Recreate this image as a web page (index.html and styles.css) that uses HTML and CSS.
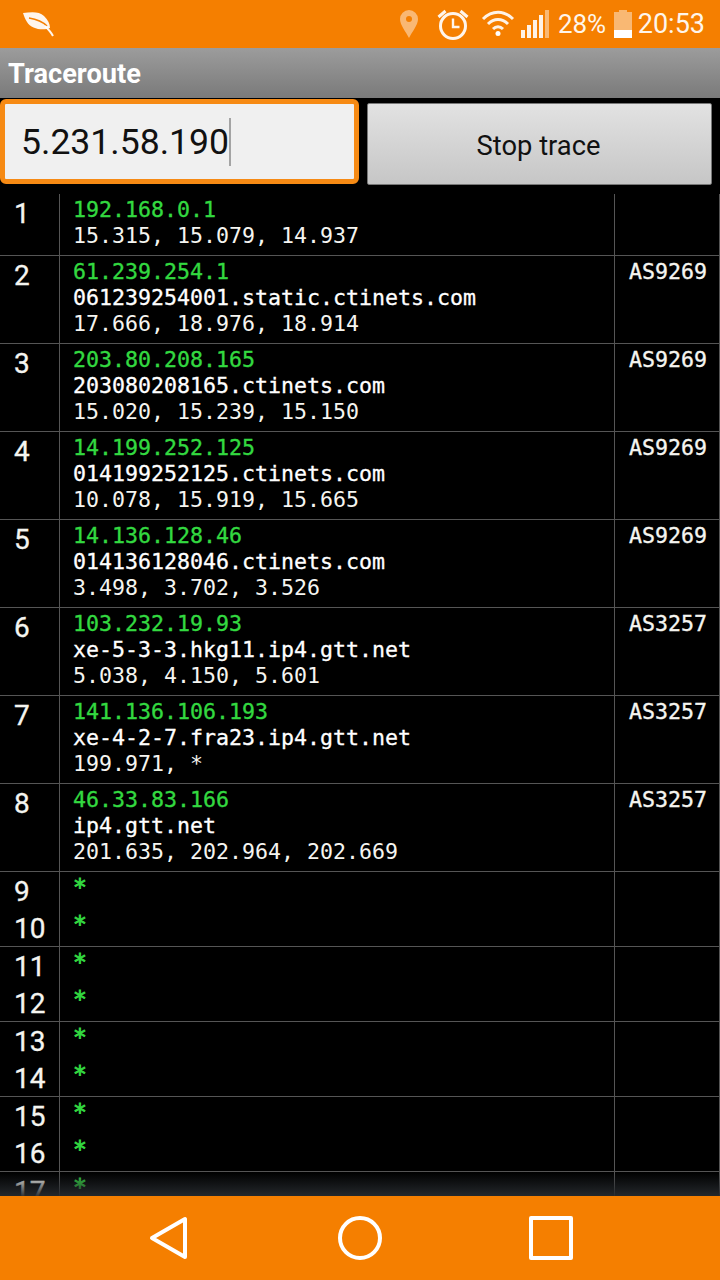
FILE: index.html
```html
<!DOCTYPE html>
<html lang="en">
<head>
<meta charset="utf-8">
<title>Traceroute</title>
<link rel="stylesheet" href="styles.css">
</head>
<body>
<div class="app">
  <header class="status">
    <svg class="leaf" width="32" height="26" viewBox="0 0 32 26"><path fill="#fff" fill-opacity=".92" d="M0 1c8-1 16-2 21 3 4 4 6 8 6 12-7 3-19 1-23-6C2 7 1 4 0 1z"/><path fill="none" stroke="#f57f00" stroke-width="1.600" d="M6 6c6 1 13 3 18 8"/><path fill="none" stroke="#fff" stroke-opacity=".92" stroke-width="2" d="M22 14c3 3 6 6 8 10"/></svg>
    <div class="status-right">
      <svg class="pin" width="18" height="28" viewBox="0 0 18 28"><path fill="#fff" fill-opacity=".45" fill-rule="evenodd" d="M9 0a9 9 0 0 1 9 9c0 6-6 13-9 19C6 22 0 15 0 9a9 9 0 0 1 9-9zm0 6a3 3 0 1 0 0 6 3 3 0 0 0 0-6z"/></svg>
      <svg class="alarm" width="32" height="31" viewBox="0 0 32 31"><g fill="none" stroke="#fff" stroke-opacity=".92"><circle cx="16" cy="17" r="12.500" stroke-width="3"/><path stroke-width="2.400" d="M16 9.500V18h6.500"/><path stroke-width="3" d="M1.500 8l7-6M30.500 8l-7-6"/></g></svg>
      <svg class="wifi" width="34" height="26" viewBox="0 0 34 26"><g fill="none" stroke="#fff" stroke-opacity=".9" stroke-width="3"><path d="M2 9c9-9 21-9 30 0"/><path d="M7 14c6-6 14-6 20 0"/><path d="M12 19c3-3 7-3 10 0"/></g><circle cx="17" cy="23.500" r="2.500" fill="#fff"/></svg>
      <svg class="signal" width="28" height="28" viewBox="0 0 28 28"><g fill="#fff"><rect y="20" width="4" height="8" fill-opacity=".9"/><rect x="6" y="15" width="4" height="13" fill-opacity=".9"/><rect x="12" y="10" width="4" height="18" fill-opacity=".9"/><rect x="18" y="5" width="4" height="23" fill-opacity=".9"/><rect x="24" width="4" height="28" fill-opacity=".45"/></g></svg>
      <span class="pct">28%</span>
      <svg class="battery" width="18" height="28" viewBox="0 0 18 28"><path fill="#fff" fill-opacity=".45" d="M5 0h8v2h5v18H0V2h5z"/><rect y="20" width="18" height="8" fill="#fff"/></svg>
      <span class="clock">20:53</span>
    </div>
  </header>

  <div class="titlebar">Traceroute</div>

  <div class="controls">
    <div class="host"><span class="host-text">5.231.58.190</span><span class="caret"></span></div>
    <button class="stop" type="button">Stop trace</button>
  </div>

  <main class="list">
    <div class="row"><div class="num">1</div><div class="info"><div class="ip">192.168.0.1</div><div>15.315, 15.079, 14.937</div></div><div class="as"></div></div>
    <div class="row"><div class="num">2</div><div class="info"><div class="ip">61.239.254.1</div><div class="host-name">061239254001.static.ctinets.com</div><div>17.666, 18.976, 18.914</div></div><div class="as">AS9269</div></div>
    <div class="row"><div class="num">3</div><div class="info"><div class="ip">203.80.208.165</div><div class="host-name">203080208165.ctinets.com</div><div>15.020, 15.239, 15.150</div></div><div class="as">AS9269</div></div>
    <div class="row"><div class="num">4</div><div class="info"><div class="ip">14.199.252.125</div><div class="host-name">014199252125.ctinets.com</div><div>10.078, 15.919, 15.665</div></div><div class="as">AS9269</div></div>
    <div class="row"><div class="num">5</div><div class="info"><div class="ip">14.136.128.46</div><div class="host-name">014136128046.ctinets.com</div><div>3.498, 3.702, 3.526</div></div><div class="as">AS9269</div></div>
    <div class="row"><div class="num">6</div><div class="info"><div class="ip">103.232.19.93</div><div class="host-name">xe-5-3-3.hkg11.ip4.gtt.net</div><div>5.038, 4.150, 5.601</div></div><div class="as">AS3257</div></div>
    <div class="row"><div class="num">7</div><div class="info"><div class="ip">141.136.106.193</div><div class="host-name">xe-4-2-7.fra23.ip4.gtt.net</div><div>199.971, *</div></div><div class="as">AS3257</div></div>
    <div class="row"><div class="num">8</div><div class="info"><div class="ip">46.33.83.166</div><div class="host-name">ip4.gtt.net</div><div>201.635, 202.964, 202.669</div></div><div class="as">AS3257</div></div>
    <div class="row pair"><div class="num"><div>9</div><div>10</div></div><div class="info stars"><div class="ip">*</div><div class="ip">*</div></div><div class="as"></div></div>
    <div class="row pair"><div class="num"><div>11</div><div>12</div></div><div class="info stars"><div class="ip">*</div><div class="ip">*</div></div><div class="as"></div></div>
    <div class="row pair"><div class="num"><div>13</div><div>14</div></div><div class="info stars"><div class="ip">*</div><div class="ip">*</div></div><div class="as"></div></div>
    <div class="row pair"><div class="num"><div>15</div><div>16</div></div><div class="info stars"><div class="ip">*</div><div class="ip">*</div></div><div class="as"></div></div>
    <div class="row pair"><div class="num"><div>17</div></div><div class="info stars"><div class="ip">*</div></div><div class="as"></div></div>
    <div class="fade"></div>
  </main>

  <nav class="navbar">
    <svg width="42" height="44" viewBox="0 0 42 44"><path fill="none" stroke="#fff" stroke-width="4" stroke-linejoin="round" d="M36 3v38L3 22z"/></svg>
    <svg width="44" height="44" viewBox="0 0 44 44"><circle cx="22" cy="22" r="20" fill="none" stroke="#fff" stroke-width="4"/></svg>
    <svg width="44" height="44" viewBox="0 0 44 44"><rect x="2" y="2" width="40" height="40" fill="none" stroke="#fff" stroke-width="4" stroke-linejoin="round"/></svg>
  </nav>
</div>
</body>
</html>
```
FILE: styles.css
```css
* { box-sizing: border-box; }
html, body { margin: 0; padding: 0; background: #000; }
.app {
  width: 720px;
  height: 1280px;
  display: flex;
  flex-direction: column;
  overflow: hidden;
  background: #000;
  font-family: Roboto, "Liberation Sans", sans-serif;
}
.status {
  height: 48px;
  flex: none;
  background: #f57f00;
  display: flex;
  align-items: center;
  justify-content: space-between;
  padding: 0 15px 0 23px;
  color: #fff;
}
.leaf { margin-top: 1px; }
.status-right { display: flex; align-items: center; }
.pin { margin-right: 19px; }
.alarm { margin-right: 12px; }
.wifi { margin-right: 6px; margin-top: -2px; }
.signal { margin-right: 9px; }
.pct { font-size: 26px; letter-spacing: -.2px; margin-right: 8px; opacity: .92; }
.battery { margin-right: 6px; }
.clock { font-size: 27px; opacity: .92; }
.titlebar {
  height: 50px;
  flex: none;
  background: linear-gradient(#9c9c9c, #7a7a7a);
  color: #fff;
  font-size: 27.200px;
  font-weight: 700;
  line-height: 52px;
  padding-left: 8px;
}
.controls {
  height: 96px;
  flex: none;
  display: flex;
  align-items: flex-start;
  padding: 1px 8px 0 0;
  gap: 8px;
}
.host {
  width: 359px;
  height: 85px;
  border: 5px solid #f68a14;
  border-radius: 6px;
  background: #f0f0f0;
  display: flex;
  align-items: center;
  padding-left: 16px;
  padding-top: 1px;
  color: #111;
  font-size: 35.600px;
}
.caret { width: 2px; height: 48px; background: #a4a4a4; }
.stop {
  flex: 1;
  height: 82px;
  margin-top: 4px;
  border: 1px solid #777;
  border-radius: 2px;
  background: linear-gradient(#e2e2e2, #c6c6c6);
  color: #111;
  font-family: inherit;
  font-size: 27.300px;
  padding: 3px 2px 0 0;
}
.list {
  flex: 1;
  min-height: 0;
  position: relative;
  overflow: hidden;
  color: #f5f5f0;
  font-family: "DejaVu Sans Mono", monospace;
  font-size: 21.600px;
  line-height: 26px;
}
.row {
  display: grid;
  grid-template-columns: 60px 555px 105px;
  border-bottom: 1px solid #555;
}
.row.pair { grid-template-rows: 74px; }
.num {
  border-right: 1px solid #555;
  font-family: Roboto, sans-serif;
  font-size: 28px;
  line-height: 37px;
  color: #f5f5f0;
  padding: 1px 0 0 14px;
  -webkit-text-stroke: .3px #f5f5f0;
}
.info { border-right: 1px solid #555; padding: 3px 13px 6px; }
.info.stars { padding-top: 0; padding-bottom: 0; }
.info.stars .ip {
  height: 37px;
  line-height: 31px;
  font-size: 23px;
  -webkit-text-stroke: .9px #33d940;
}
.as {
  border-right: 1px solid #555;
  padding: 3px 0 0 14px;
  -webkit-text-stroke: .35px #f5f5f0;
}
.ip { color: #33d940; -webkit-text-stroke: .35px #33d940; }
.host-name { color: #fff; -webkit-text-stroke: .3px #fff; }
.fade {
  position: absolute;
  left: 0;
  right: 0;
  bottom: 0;
  height: 24px;
  background: linear-gradient(rgba(38, 42, 46, 0), rgba(38, 42, 46, .95));
}
.navbar {
  height: 84px;
  flex: none;
  background: #f57f00;
  display: flex;
  align-items: center;
  padding-left: 149px;
  gap: 147px;
}
```
